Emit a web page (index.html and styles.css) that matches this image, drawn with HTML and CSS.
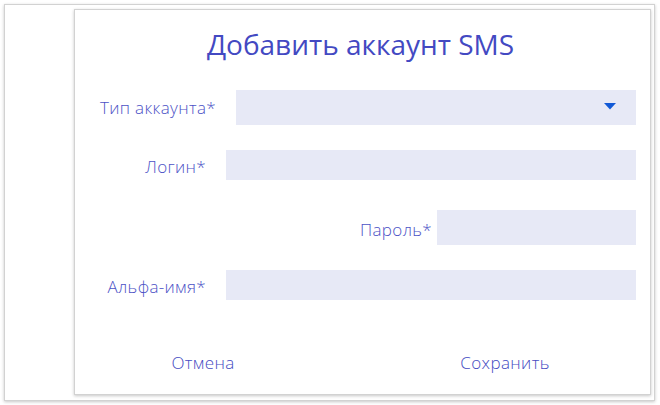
FILE: index.html
```
<!DOCTYPE html>
<html lang="ru">
<head>
<meta charset="utf-8">
<link rel="stylesheet" href="styles.css">
</head>
<body>
<div class="frame">
  <div class="dialog">
    <h1 class="title">Добавить аккаунт SMS</h1>
    <div class="row row-type">
      <label class="label">Тип аккаунта*</label>
      <div class="field select">
        <svg class="caret" width="12" height="7" viewBox="0 0 12 7"><path d="M0 0H12L6 6.5Z" fill="#1259d6"/></svg>
      </div>
    </div>
    <div class="row row-login">
      <label class="label">Логин*</label>
      <div class="field"></div>
    </div>
    <div class="row row-pass">
      <label class="label">Пароль*</label>
      <div class="field"></div>
    </div>
    <div class="row row-alpha">
      <label class="label">Альфа-имя*</label>
      <div class="field"></div>
    </div>
    <div class="actions">
      <button class="btn btn-cancel">Отмена</button>
      <button class="btn btn-save">Сохранить</button>
    </div>
  </div>
</div>
</body>
</html>
```
FILE: styles.css
```
html, body {
  margin: 0;
  padding: 0;
  background: #ffffff;
  overflow: hidden;
}
body {
  font-family: "Open Sans", "Noto Sans", sans-serif;
  width: 660px;
  height: 405px;
}
.frame {
  margin: 4px 0 0 4px;
  width: 651px;
  height: 397px;
  box-sizing: border-box;
  background: #fff;
  border: 1px solid #d2d2d2;
  box-shadow: 0 1px 3px rgba(0,0,0,0.22);
  padding: 4px 0 0 69px;
}
.dialog {
  width: 577px;
  height: 386px;
  box-sizing: border-box;
  background: #fff;
  border: 1px solid #d2d2d2;
  box-shadow: 0 1px 3px rgba(0,0,0,0.22);
  padding-top: 16px;
  display: flex;
  flex-direction: column;
}
.title {
  margin: 0;
  font-weight: 400;
  font-size: 28px;
  line-height: 36px;
  color: #4349c2;
  text-align: center;
  padding-right: 4px;
}
.row {
  display: flex;
  align-items: center;
  padding-right: 14px;
}
.label {
  font-size: 17px;
  font-weight: 350;
  line-height: 22px;
  letter-spacing: 0.35px;
  color: #4c52c6;
  text-align: right;
  padding-top: 4px;
  box-sizing: border-box;
  flex: none;
}
.field {
  flex: 1;
  background: #e7e9f6;
  position: relative;
}
.row-type { margin-top: 28px; }
.row-type .label { width: 141px; margin-right: 20px; padding-top: 0; }
.row-type .field { height: 35px; }
.row-login { margin-top: 25px; }
.row-login .label { width: 131px; margin-right: 20px; }
.row-login .field { height: 30px; }
.row-pass { margin-top: 30px; }
.row-pass .label { width: 357px; margin-right: 5px; }
.row-pass .field { height: 35px; }
.row-alpha { margin-top: 25px; }
.row-alpha .label { width: 131px; margin-right: 20px; }
.row-alpha .field { height: 30px; }
.caret {
  position: absolute;
  right: 20px;
  top: 13px;
}
.actions {
  display: flex;
  justify-content: space-between;
  padding: 0 85px 0 68px;
  margin-top: 48px;
}
.btn {
  width: 120px;
  height: 28px;
  border: 0;
  background: transparent;
  font-family: "Open Sans", "Noto Sans", sans-serif;
  font-size: 17px;
  font-weight: 350;
  letter-spacing: 0.4px;
  color: #454bc2;
  padding: 0;
  cursor: pointer;
}
```
